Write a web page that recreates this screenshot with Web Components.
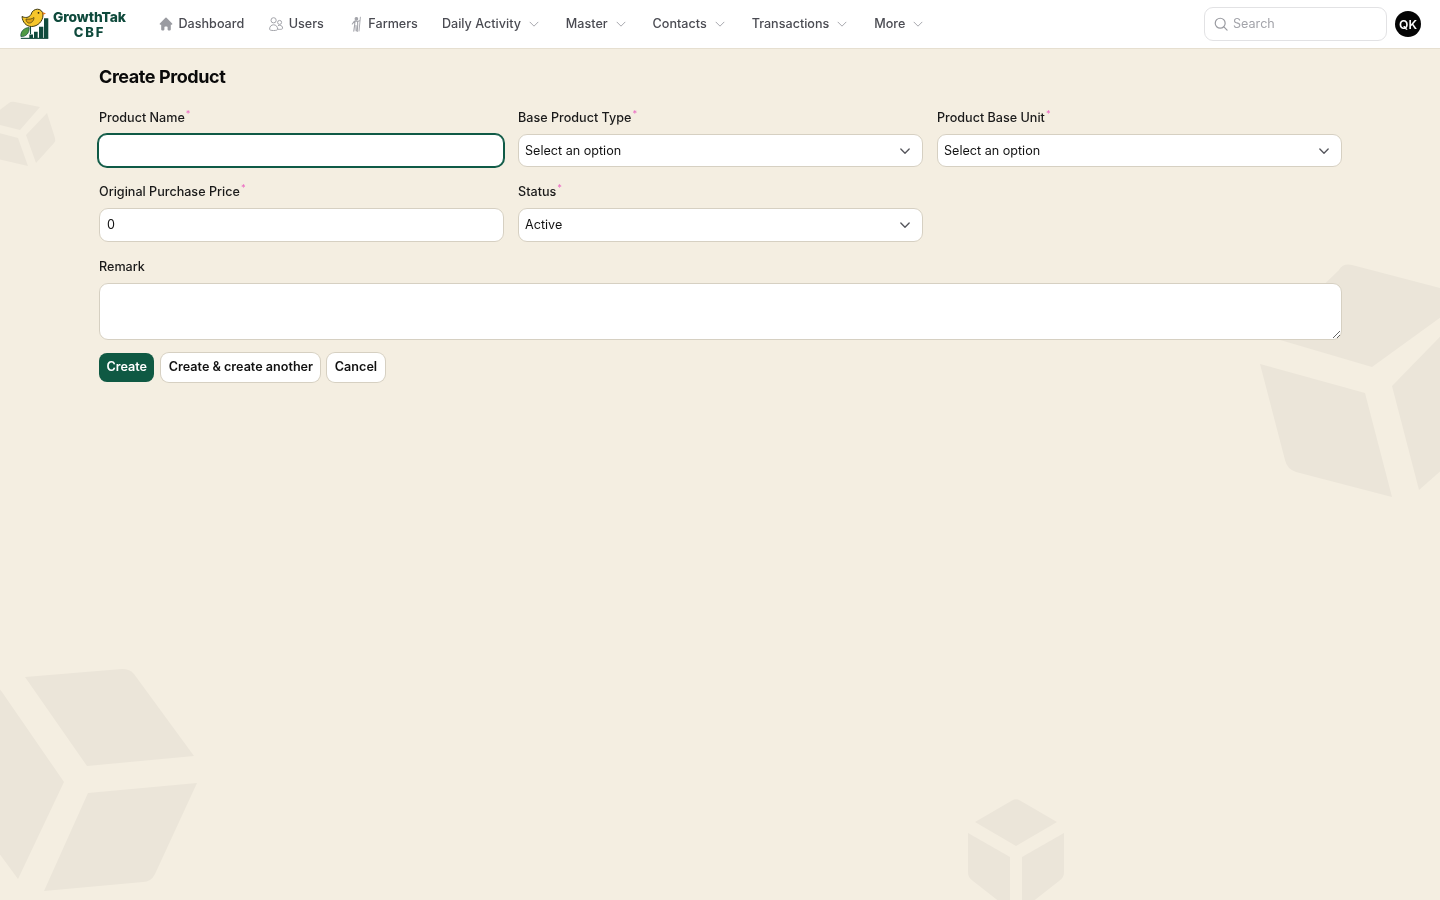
<!DOCTYPE html>
<html lang="en">
<head>
<meta charset="utf-8">
<title>Create Product</title>
<style>
html,body{margin:0;padding:0;height:100%}
body{background:#f4eee1;font-family:Inter,"Liberation Sans",sans-serif;color:#0a0a0a}
</style>
</head>
<body>
<bg-art></bg-art>
<app-nav>
  <app-logo slot="logo"></app-logo>
  <nav-item icon="home">Dashboard</nav-item>
  <nav-item icon="users">Users</nav-item>
  <nav-item icon="farmer">Farmers</nav-item>
  <nav-item caret>Daily Activity</nav-item>
  <nav-item caret>Master</nav-item>
  <nav-item caret>Contacts</nav-item>
  <nav-item caret>Transactions</nav-item>
  <nav-item caret>More</nav-item>
  <nav-search slot="end"></nav-search>
  <user-avatar slot="end">QK</user-avatar>
</app-nav>
<product-page heading="Create Product">
  <form-grid>
    <form-field label="Product Name" required><text-box focused></text-box></form-field>
    <form-field label="Base Product Type" required><select-box value="Select an option"></select-box></form-field>
    <form-field label="Product Base Unit" required><select-box value="Select an option"></select-box></form-field>
    <form-field label="Original Purchase Price" required><text-box value="0"></text-box></form-field>
    <form-field label="Status" required><select-box value="Active"></select-box></form-field>
    <form-field label="Remark" wide><area-box></area-box></form-field>
  </form-grid>
  <action-row>
    <app-button primary>Create</app-button>
    <app-button>Create &amp; create another</app-button>
    <app-button>Cancel</app-button>
  </action-row>
</product-page>
<script>
const ICONS={
home:'<svg viewBox="0 0 20 20" width="16" height="16" fill="#9a9ba1"><path d="M9.293 2.293a1 1 0 0 1 1.414 0l7 7A1 1 0 0 1 17 11h-1v6a1 1 0 0 1-1 1h-2a1 1 0 0 1-1-1v-3a1 1 0 0 0-1-1H9a1 1 0 0 0-1 1v3a1 1 0 0 1-1 1H5a1 1 0 0 1-1-1v-6H3a1 1 0 0 1-.707-1.707l7-7Z"/></svg>',
users:'<svg viewBox="0 0 16 16" width="16" height="16" fill="none" stroke="#a3a4aa" stroke-width="1"><circle cx="5.600" cy="4.300" r="2.600"/><circle cx="11.600" cy="6.400" r="2"/><path d="M1.600 13.200c0-2.900 1.800-4.400 4-4.400s4 1.500 4 4.400c0 .9-1.400 1.300-4 1.300s-4-.4-4-1.300Z"/><path d="M10 9.600c.5-.2 1-.3 1.600-.3 1.900 0 3 1.100 3 3 0 .8-1.300 1.100-3 1.100-.5 0-1-.1-1.600-.2"/></svg>',
farmer:'<svg viewBox="0 0 16 16" width="16" height="16" fill="none" stroke="#a3a4aa" stroke-width="1.100" stroke-linecap="round" stroke-linejoin="round"><circle cx="8.400" cy="2.800" r="1.300" fill="#a3a4aa"/><path d="M6.300 5.300 8 4.900l1.600.5.100 3.600-.5 6.400M7 5.300l-.4 4-.8 5.800M8 9.500l.1 5.300M6.300 5.300 4.300 8M9.600 5.500l2-.7"/><path d="M12.400 1.200 11 15" stroke-width=".9"/></svg>',
chev:'<svg viewBox="0 0 20 20" width="16" height="16" fill="none" stroke="#a3a4aa" stroke-width="1.200" stroke-linecap="round" stroke-linejoin="round"><path d="m5 7.700 5 5 5-5"/></svg>',
selchev:'<svg viewBox="0 0 20 20" width="16" height="16" fill="none" stroke="#55565c" stroke-width="1.700" stroke-linecap="round" stroke-linejoin="round"><path d="m4.800 7.500 5.200 5.200 5.200-5.200"/></svg>',
search:'<svg viewBox="0 0 20 20" width="16" height="16" fill="none" stroke="#9a9ba1" stroke-width="1.500" stroke-linecap="round"><circle cx="9" cy="9" r="6.200"/><path d="m13.600 13.600 4 4"/></svg>'
};
function define(name,css,html,init){
  customElements.define(name,class extends HTMLElement{
    connectedCallback(){
      if(this.shadowRoot)return;
      const r=this.attachShadow({mode:'open'});
      r.innerHTML='<style>'+css+'</style>'+(typeof html==='function'?html(this):html);
      if(init)init(this,r);
    }
  });
}
define('bg-art',':host{position:fixed;inset:0;z-index:-1;display:block;overflow:hidden}svg{display:block}path{fill:#ebe5d9}',
`<svg width="1440" height="900" viewBox="0 0 1440 900">
<path d="M1339 270Q1343 263 1352 265L1470 296L1372 367L1270 337Z"/>
<path d="M1260 364L1365 393L1392 497L1296 472Q1287 469 1285 460Z"/>
<path d="M1392 386L1470 306V445L1419 490Z"/>
<path d="M25 677L122 669Q130 669 134 674L194 756L87 766Z"/>
<path d="M88 793L197 783L155 874Q151 882 143 882L44 891Z"/>
<path d="M2 692L64 782L18 879L-40 800V640Z"/>
<path d="M1012 800.500Q1016 798 1020 800.500L1057 822L1016 846L975 822Z"/>
<path d="M968 833L1010 857V910L973 881Q968 878 968 872Z"/>
<path d="M1064 833L1022 857V910L1059 881Q1064 878 1064 872Z"/>
<path d="M9 103Q11 101 15 102L40 107L20 130L-20 120V125Z"/>
<path d="M-20 128L18 138L28 166L-20 155Z"/>
<path d="M47 113L55 138Q56 141 54 143L36 163L26 135Z"/>
</svg>`);
define('app-nav',
`:host{display:flex;align-items:center;height:48px;background:#fff;box-shadow:0 1px 0 #e6dfd0;padding:0 19px 0 20px;position:relative;box-sizing:content-box}
.links{display:flex;align-items:center;margin-left:14px;margin-top:-1px}
.end{display:flex;align-items:center;gap:8px;margin-left:auto}`,
`<slot name="logo"></slot><div class="links"><slot></slot></div><div class="end"><slot name="end"></slot></div>`);
define('app-logo',
`:host{display:flex;align-items:center;gap:4px;width:112px;color:#0f4a3c}
svg{flex:none;display:block}
.t{display:flex;flex-direction:column;align-items:center;font-weight:800;line-height:15px;font-size:13.800px;letter-spacing:-.1px;padding-top:1px}
.c{letter-spacing:1.800px;font-size:13px}`,
`<svg width="29" height="32" viewBox="0 0 29 32">
<path d="M.8 29.800h27.500v1.100H.8z" fill="#0f4a3c"/>
<path d="M9.300 30V26.500h3.700V30zM14 30V23.700h3.700V30zM19 30V18.700h4.300V30zM24 30V10.300h4.300V30z" fill="#0f4a3c"/>
<path d="M.9 28.500C.2 23.800 4 19.600 9.200 19.500c.4 5.400-3.200 9.500-8.300 9Z" fill="#4f9a45" stroke="#0f4a3c" stroke-width=".7"/>
<path d="M10.500 18v8" stroke="#0f4a3c" stroke-width="1.100"/>
<path d="M2 8.500C5 10 9 10 11 6.500 12 3 14.500 1.200 17.500 1.200 21 1.200 23 4 23 7 23 13 18 18.500 11.500 18.500 6 18.500 2.500 14 2 8.500Z" fill="#f6c62b" stroke="#3d3a12" stroke-width="1"/>
<path d="M6 11C9 11.500 12 11 14 9.500 14 13 11 15.500 8.500 15 7 14.500 6 13 6 11Z" fill="#dfa116" stroke="#3d3a12" stroke-width=".7"/>
<circle cx="18.500" cy="4.800" r=".9" fill="#1a1a1a"/><path d="M22.500 4 26 5.500 22.800 7Z" fill="#e8791a"/>
</svg><div class="t"><span>GrowthTak</span><span class="c">CBF</span></div>`);
define('nav-item',
`:host{display:flex;align-items:center;gap:4.500px;padding:0 12px;height:32px;font:500 12.600px/16px Inter,"Liberation Sans",sans-serif;color:#4a4b52;white-space:nowrap}
svg{display:block;flex:none}span{margin-left:.4px}`,
el=>{const i=el.getAttribute('icon');return (i?ICONS[i]:'')+'<slot></slot>'+(el.hasAttribute('caret')?'<span>'+ICONS.chev+'</span>':'')});
define('nav-search',
`:host{display:flex;align-items:center;gap:3px;box-sizing:border-box;width:183px;height:34px;padding:0 8px;background:#fff;border:1px solid #e2e2e4;border-radius:9px}
svg{display:block;flex:none}
input{border:0;outline:0;padding:0 0 1px 1px;background:none;flex:1;min-width:0;font:400 12.600px Inter,"Liberation Sans",sans-serif;color:#333}
input::placeholder{color:#a3a4aa;opacity:1}`,
`${ICONS.search}<input placeholder="Search" aria-label="Search">`);
define('user-avatar',
`:host{display:flex;align-items:center;justify-content:center;width:26px;height:26px;border-radius:50%;background:#050505;color:#fff;font:600 12.200px Inter,"Liberation Sans",sans-serif}`,
`<slot></slot>`);
define('product-page',
`:host{display:block;width:1243px;margin:0 0 0 99px;padding-top:16px}
h1{margin:0 0 17.600px;font:700 18px/26px Inter,"Liberation Sans",sans-serif;letter-spacing:-.42px;color:#0a0a0a}`,
el=>`<h1>${el.getAttribute('heading')}</h1><slot></slot>`);
define('form-grid',
`:host{display:grid;grid-template-columns:repeat(3,405px);column-gap:14px;row-gap:15.200px}`,`<slot></slot>`);
define('form-field',
`:host{display:flex;flex-direction:column;gap:5.240px;min-width:0}
:host([wide]){grid-column:1/-1}
label{font:500 12.600px/20.800px Inter,"Liberation Sans",sans-serif;color:#1a1a1a}
sup{color:#ec6fc4;font-size:9px;line-height:0;font-weight:500;vertical-align:5px;margin-left:1px}`,
el=>`<label>${el.getAttribute('label')}${el.hasAttribute('required')?'<sup>*</sup>':''}</label><slot></slot>`);
const fieldCss=`display:block;box-sizing:border-box;width:100%;background:#fff;border:1px solid #d6d0c2;border-radius:9px;font:400 12.600px Inter,"Liberation Sans",sans-serif;color:#111;outline:0;margin:0`;
define('text-box',
`:host{display:block}input{${fieldCss};height:33.500px;padding:0 7px .6px}
input.f{border:1px solid #0f5a46;box-shadow:0 0 0 1px #0f5a46;width:calc(100% + 1px);height:32.500px;margin:.5px 0 .5px -1px;padding:0 8px}`,
el=>`<input aria-label="field" class="${el.hasAttribute('focused')?'f':''}" value="${el.getAttribute('value')||''}">`);
define('select-box',
`:host{display:block;position:relative}
select{${fieldCss};height:33.500px;padding:0 28px .6px 6px;appearance:none;-webkit-appearance:none}
svg{position:absolute;right:10.500px;top:9px;pointer-events:none}`,
el=>`<select aria-label="select"><option>${el.getAttribute('value')}</option></select>${ICONS.selchev}`);
define('area-box',
`:host{display:block}textarea{${fieldCss};height:57px;padding:6px 7px;resize:vertical;display:block}`,
`<textarea aria-label="Remark"></textarea>`);
define('action-row',
`:host{display:flex;align-items:center;gap:7px;margin-top:13px}`,`<slot></slot>`);
define('app-button',
`:host{display:inline-flex;align-items:center;justify-content:center;box-sizing:border-box;height:29px;padding:0 7.400px 2px;border-radius:8px;background:#fff;box-shadow:0 0 0 1px #d6d0c2;font:600 12.600px Inter,"Liberation Sans",sans-serif;color:#111;white-space:nowrap}
:host([primary]){background:#0f5943;box-shadow:none;color:#fff}`,`<slot></slot>`);
</script>
</body>
</html>
